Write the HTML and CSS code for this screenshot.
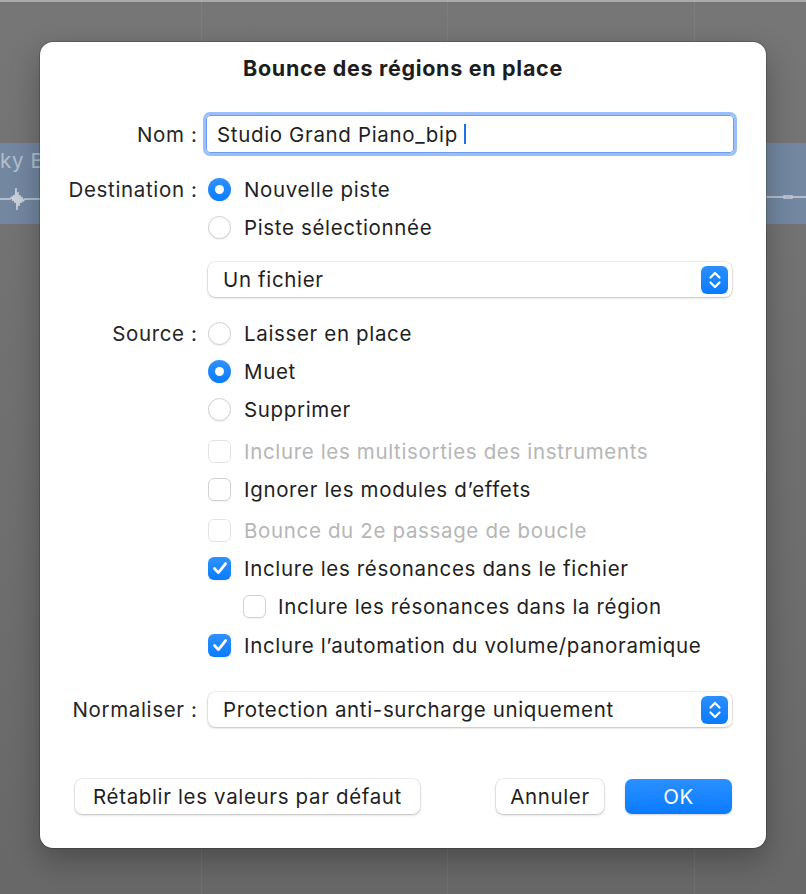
FILE: index.html
```html
<!DOCTYPE html>
<html lang="fr">
<head>
<meta charset="utf-8">
<title>Bounce des régions en place</title>
<link rel="stylesheet" href="styles.css">
</head>
<body>
<div class="desk">
  <div class="backdrop">
    <div class="topline"></div>
    <div class="vline v1"></div>
    <div class="vline v2"></div>
    <div class="vline v3"></div>
    <div class="track">
      <span class="track-name">ky Bo</span>
      <svg class="wave wave-left" width="40" height="30" viewBox="0 0 40 30"><path d="M0 15 H10 L12 13 L13 17 L14 11 L15 19 L16 4 L17 26 L18 8 L19 22 L20 11 L21 19 L22 13 L23 17 L25 15 H40" fill="none" stroke="#c9d0da" stroke-width="1.5"/></svg>
      <svg class="wave wave-right" width="40" height="30" viewBox="0 0 40 30"><path d="M0 13 H18 M18 12 h8 v2 h-8 z M26 13 H40" fill="none" stroke="#c9d0da" stroke-width="1.4"/></svg>
    </div>
  </div>

  <div class="dialog">
    <h1 class="title">Bounce des régions en place</h1>

    <div class="row row-name">
      <span class="label">Nom&nbsp;:</span>
      <div class="field">Studio Grand Piano_bip<span class="caret"></span></div>
    </div>

    <div class="row gap-a">
      <span class="label">Destination&nbsp;:</span>
      <div class="opt"><span class="radio on"></span>Nouvelle piste</div>
    </div>
    <div class="row">
      <span class="label"></span>
      <div class="opt"><span class="radio"></span>Piste sélectionnée</div>
    </div>
    <div class="row row-popup gap-b">
      <span class="label"></span>
      <div class="popup"><span>Un fichier</span><span class="stepper"><svg width="26" height="28" viewBox="0 0 26 28"><path d="M8.5 11.5 L13 7 L17.5 11.5 M8.5 16.5 L13 21 L17.5 16.5" fill="none" stroke="#fff" stroke-width="2.2" stroke-linecap="round" stroke-linejoin="round"/></svg></span></div>
    </div>

    <div class="row gap-a">
      <span class="label">Source&nbsp;:</span>
      <div class="opt"><span class="radio"></span>Laisser en place</div>
    </div>
    <div class="row">
      <span class="label"></span>
      <div class="opt"><span class="radio on"></span>Muet</div>
    </div>
    <div class="row">
      <span class="label"></span>
      <div class="opt"><span class="radio"></span>Supprimer</div>
    </div>

    <div class="checks">
      <div class="row">
        <span class="label"></span>
        <div class="opt disabled"><span class="check"></span>Inclure les multisorties des instruments</div>
      </div>
      <div class="row">
        <span class="label"></span>
        <div class="opt"><span class="check"></span>Ignorer les modules d’effets</div>
      </div>
      <div class="row nudge-3">
        <span class="label"></span>
        <div class="opt disabled"><span class="check"></span>Bounce du 2e passage de boucle</div>
      </div>
      <div class="row">
        <span class="label"></span>
        <div class="opt"><span class="check on"><svg width="22" height="22" viewBox="0 0 22 22"><path d="M5.5 11.5 L9.4 15.6 L16.6 6.6" fill="none" stroke="#fff" stroke-width="2.8" stroke-linecap="round" stroke-linejoin="round"/></svg></span>Inclure les résonances dans le fichier</div>
      </div>
      <div class="row">
        <span class="label"></span>
        <div class="opt nested"><span class="check"></span>Inclure les résonances dans la région</div>
      </div>
      <div class="row nudge-1">
        <span class="label"></span>
        <div class="opt"><span class="check on"><svg width="22" height="22" viewBox="0 0 22 22"><path d="M5.5 11.5 L9.4 15.6 L16.6 6.6" fill="none" stroke="#fff" stroke-width="2.8" stroke-linecap="round" stroke-linejoin="round"/></svg></span>Inclure l’automation du volume/panoramique</div>
      </div>
    </div>

    <div class="row row-popup gap-c">
      <span class="label">Normaliser&nbsp;:</span>
      <div class="popup"><span>Protection anti-surcharge uniquement</span><span class="stepper"><svg width="26" height="28" viewBox="0 0 26 28"><path d="M8.5 11.5 L13 7 L17.5 11.5 M8.5 16.5 L13 21 L17.5 16.5" fill="none" stroke="#fff" stroke-width="2.2" stroke-linecap="round" stroke-linejoin="round"/></svg></span></div>
    </div>

    <div class="buttons">
      <button class="btn btn-reset">Rétablir les valeurs par défaut</button>
      <div class="btn-group">
        <button class="btn btn-cancel">Annuler</button>
        <button class="btn btn-ok">OK</button>
      </div>
    </div>
  </div>
</div>
</body>
</html>
```

FILE: styles.css
```css
* { box-sizing: border-box; }

html, body {
  margin: 0;
  padding: 0;
}

body {
  width: 806px;
  height: 894px;
  overflow: hidden;
  font-family: "Inter", "Liberation Sans", sans-serif;
  color: #1f1f1f;
}

.desk {
  position: relative;
  width: 806px;
  height: 894px;
  background: linear-gradient(180deg, #767676 0%, #6e6e6e 60%, #686868 100%);
  padding-top: 42px;
  padding-left: 40px;
}

.backdrop {
  position: absolute;
  inset: 0;
  overflow: hidden;
}

.topline {
  position: absolute;
  left: 0; right: 0; top: 0;
  height: 2px;
  background: #a9a9a9;
}

.vline {
  position: absolute;
  top: 0;
  bottom: 0;
  width: 1px;
  background: rgba(255,255,255,0.06);
}
.v1 { left: 201px; }
.v2 { left: 447px; }
.v3 { left: 694px; }

.track {
  position: absolute;
  left: 0; right: 0;
  top: 143px;
  height: 81px;
  background: #7387a1;
}

.track-name {
  position: absolute;
  left: 0;
  top: 5px;
  font-size: 20.5px;
  letter-spacing: 0.65px;
  color: #b4bfcd;
}

.wave { position: absolute; }
.wave-left { left: 0; top: 41px; }
.wave-right { right: 0; top: 41px; }

.dialog {
  position: relative;
  width: 726px;
  height: 806px;
  background: #ffffff;
  border-radius: 13px;
  box-shadow: 0 0 0 1px rgba(0,0,0,0.18), 0 12px 30px rgba(0,0,0,0.28);
  padding: 14px 34px 0 0;
}

.title {
  margin: 0;
  height: 24px;
  line-height: 24px;
  font-size: 21.5px;
  font-weight: 700;
  text-align: center;
  padding-left: 34px;
  color: #1d1d1d;
  letter-spacing: 0.7px;
}

.row {
  display: grid;
  grid-template-columns: 157px 524px;
  column-gap: 11px;
  align-items: center;
  height: 38px;
  font-size: 20.5px;
  letter-spacing: 0.65px;
}

.label {
  text-align: right;
  color: #262626;
  white-space: nowrap;
  margin-right: -0.65px;
}

.row-name { margin-top: 35px; }
.gap-a { margin-top: 17px; }
.gap-b { margin-top: 16px; height: 35px; }
.gap-c { margin-top: 28px; height: 35px; }
.checks { margin-top: 4px; }
.nudge-3 { margin-top: 3px; }
.nudge-1 { margin-top: 1px; }

.field {
  height: 38px;
  margin-left: -2px;
  margin-right: -2px;
  border: 1px solid #6d9ff0;
  border-radius: 4px;
  box-shadow: 0 0 0 3px #9bbffa;
  display: flex;
  align-items: center;
  padding-left: 10px;
  color: #1f1f1f;
}

.caret {
  display: inline-block;
  width: 2.5px;
  height: 20px;
  margin-left: 6px;
  background: #1a73e8;
}

.opt {
  display: flex;
  align-items: center;
  gap: 13px;
  color: #1f1f1f;
  white-space: nowrap;
}

.opt.disabled { color: #b6b6b6; }
.opt.nested { padding-left: 35px; gap: 12px; }

.radio {
  flex: none;
  width: 23px;
  height: 23px;
  border-radius: 50%;
  background: #fff;
  border: 1px solid #cfcfcf;
  box-shadow: 0 1px 1px rgba(0,0,0,0.06);
  display: flex;
  align-items: center;
  justify-content: center;
}

.radio.on {
  border: none;
  background: linear-gradient(180deg, #2f91ff 0%, #0a7cff 100%);
}
.radio.on::after {
  content: "";
  width: 9px;
  height: 9px;
  border-radius: 50%;
  background: #fff;
}

.check {
  flex: none;
  width: 23px;
  height: 23px;
  border-radius: 6px;
  background: #fff;
  border: 1px solid #d2d2d2;
  box-shadow: 0 1px 1px rgba(0,0,0,0.05);
  display: flex;
  align-items: center;
  justify-content: center;
}
.opt.disabled .check { border-color: #e3e3e3; box-shadow: none; }

.check.on {
  border: none;
  background: linear-gradient(180deg, #2f91ff 0%, #0a7cff 100%);
}

.popup {
  height: 35px;
  border-radius: 7px;
  background: #fff;
  box-shadow: 0 0 0 0.5px rgba(0,0,0,0.12), 0 1px 2.5px rgba(0,0,0,0.2);
  display: flex;
  align-items: center;
  justify-content: space-between;
  padding: 0 4px 0 15px;
  color: #1f1f1f;
}

.stepper {
  width: 27px;
  height: 28px;
  border-radius: 6px;
  background: linear-gradient(180deg, #2b8fff 0%, #0a7bff 100%);
  display: flex;
  align-items: center;
  justify-content: center;
}
.stepper svg { display: block; }

.buttons {
  margin-top: 52px;
  margin-left: 35px;
  display: flex;
  justify-content: space-between;
  align-items: center;
}

.btn-group {
  display: flex;
  gap: 21px;
}

.btn {
  font-family: inherit;
  font-size: 20.5px;
  letter-spacing: 0.65px;
  height: 35px;
  border: none;
  border-radius: 7px;
  background: #fff;
  color: #1f1f1f;
  box-shadow: 0 0 0 0.5px rgba(0,0,0,0.12), 0 1px 2.5px rgba(0,0,0,0.22);
  padding: 0;
}

.btn-reset { width: 345px; }
.btn-cancel { width: 108px; }
.btn-ok {
  width: 107px;
  color: #fff;
  background: linear-gradient(180deg, #2a90ff 0%, #0a7bff 100%);
  box-shadow: 0 1px 2px rgba(0,0,0,0.2);
}
```
